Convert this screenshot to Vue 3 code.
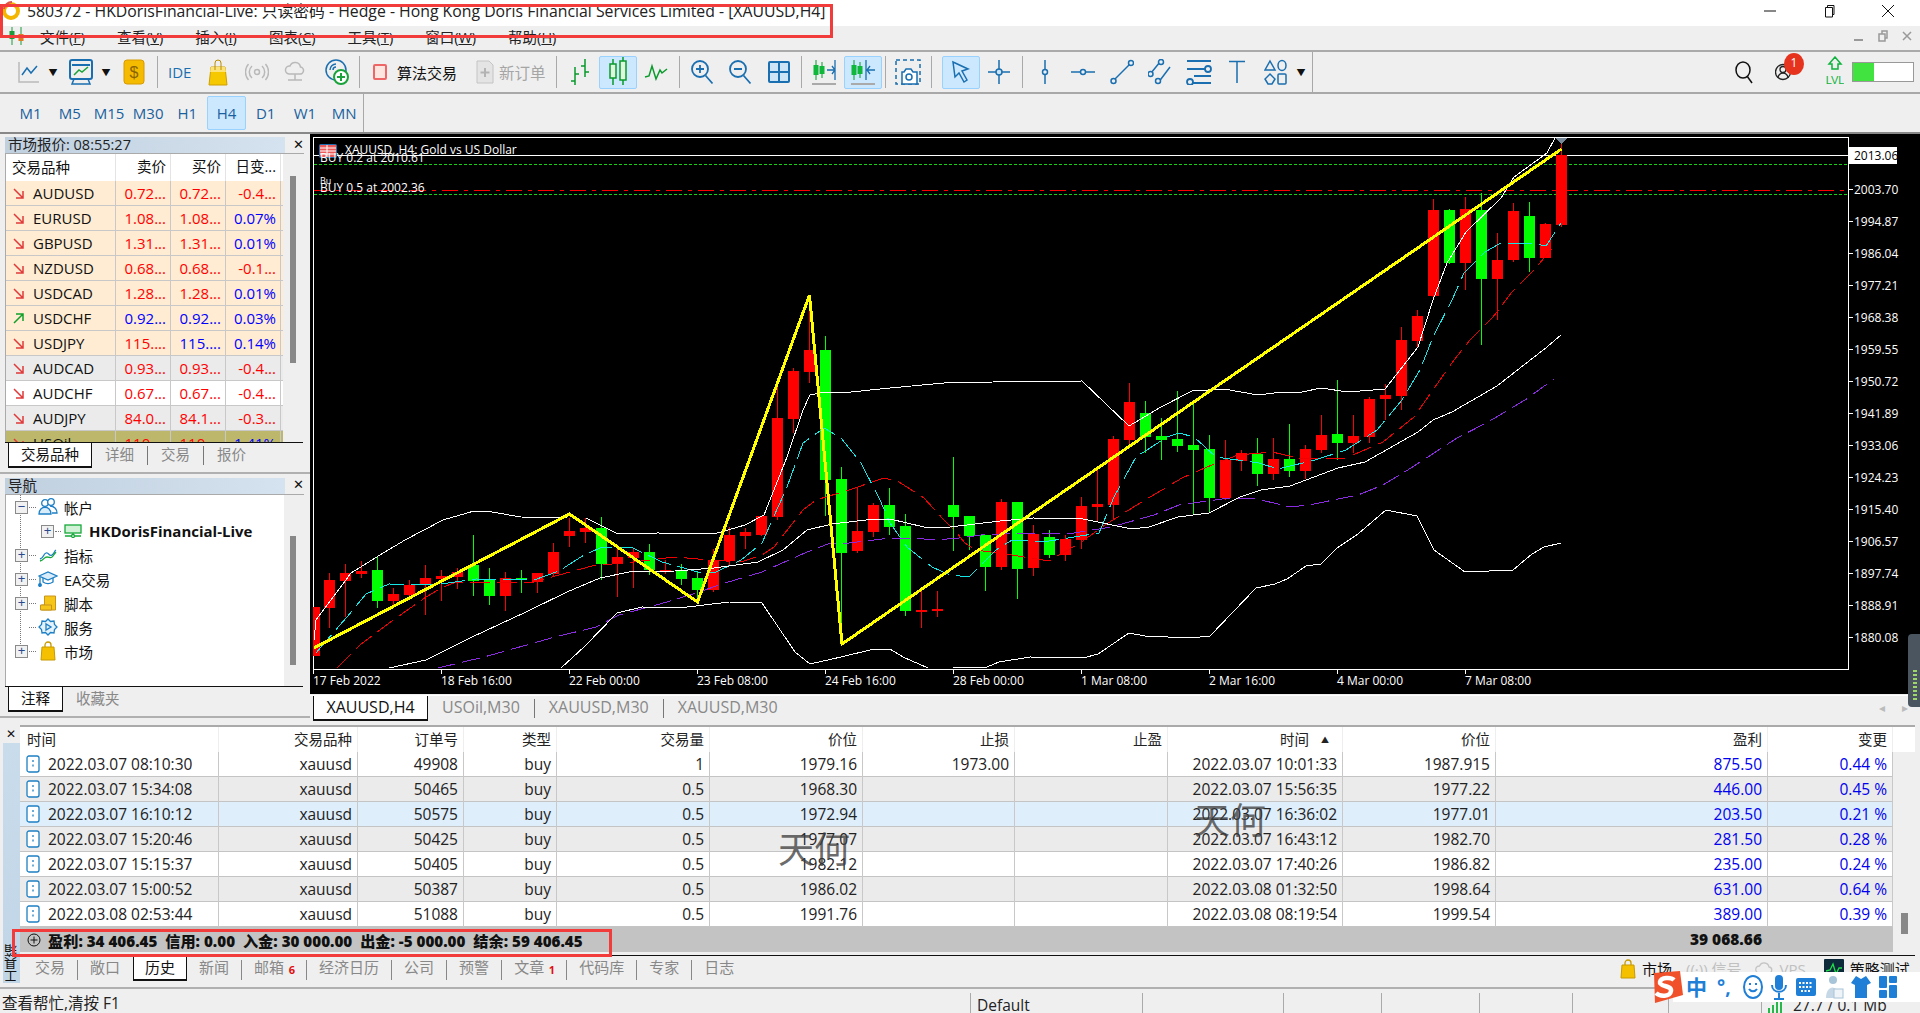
<script setup>
const menus = [['文件','F'],['查看','V'],['插入','I'],['图表','C'],['工具','T'],['窗口','W'],['帮助','H']]
const tfs = ['M1','M5','M15','M30','H1','H4','D1','W1','MN']
const quotes = [
  ['AUDUSD','0.72...','0.72...','-0.4...','c',0,0,0,0],
  ['EURUSD','1.08...','1.08...','0.07%','c',0,0,1,0],
  ['GBPUSD','1.31...','1.31...','0.01%','c',0,0,1,0],
  ['NZDUSD','0.68...','0.68...','-0.1...','c',0,0,0,0],
  ['USDCAD','1.28...','1.28...','0.01%','c',0,0,1,0],
  ['USDCHF','0.92...','0.92...','0.03%','c',1,1,1,1],
  ['USDJPY','115....','115....','0.14%','c',0,1,1,0],
  ['AUDCAD','0.93...','0.93...','-0.4...','g',0,0,0,0],
  ['AUDCHF','0.67...','0.67...','-0.4...','w',0,0,0,0],
  ['AUDJPY','84.0...','84.1...','-0.3...','g',0,0,0,0],
  ['USOil','110....','110....','1.41%','k',0,0,1,0]
].map(q => ({ sym:q[0], bid:q[1], ask:q[2], chg:q[3], bg:q[4], bidUp:q[5], askUp:q[6], chgUp:q[7], up:q[8] }))

const tree = [
  { t:'帐户', box:'−', icon:'users' },
  { t:'HKDorisFinancial-Live', box:'+', icon:'srv', sub:true },
  { t:'指标', box:'+', icon:'ind' },
  { t:'EA交易', box:'+', icon:'ea' },
  { t:'脚本', box:'+', icon:'scr' },
  { t:'服务', box:'', icon:'svc' },
  { t:'市场', box:'+', icon:'bag' }
]

const docTabs = ['USOil,M30','XAUUSD,M30','XAUUSD,M30']

const heads = ['时间','交易品种','订单号','类型','交易量','价位','止损','止盈','时间','价位','盈利','变更']
const trades = [
  ['2022.03.07 08:10:30','xauusd','49908','buy','1','1979.16','1973.00','','2022.03.07 10:01:33','1987.915','875.50','0.44 %','w'],
  ['2022.03.07 15:34:08','xauusd','50465','buy','0.5','1968.30','','','2022.03.07 15:56:35','1977.22','446.00','0.45 %','g'],
  ['2022.03.07 16:10:12','xauusd','50575','buy','0.5','1972.94','','','2022.03.07 16:36:02','1977.01','203.50','0.21 %','b'],
  ['2022.03.07 15:20:46','xauusd','50425','buy','0.5','1977.07','','','2022.03.07 16:43:12','1982.70','281.50','0.28 %','g'],
  ['2022.03.07 15:15:37','xauusd','50405','buy','0.5','1982.12','','','2022.03.07 17:40:26','1986.82','235.00','0.24 %','w'],
  ['2022.03.07 15:00:52','xauusd','50387','buy','0.5','1986.02','','','2022.03.08 01:32:50','1998.64','631.00','0.64 %','g'],
  ['2022.03.08 02:53:44','xauusd','51088','buy','0.5','1991.76','','','2022.03.08 08:19:54','1999.54','389.00','0.39 %','w']
].map(r => ({ cells:r.slice(0,12), bg:r[12] }))

const bottomTabs = [
  { t:'交易' }, { t:'敞口' }, { t:'历史', on:true }, { t:'新闻' }, { t:'邮箱', n:'6' }, { t:'经济日历' },
  { t:'公司' }, { t:'预警' }, { t:'文章', n:'1' }, { t:'代码库' }, { t:'专家' }, { t:'日志' }
]
const statusCells = [141, 98, 98, 93, 96, 93]

// chart data
const y6 = a => a.map(v => 400 + v / 3)
const raw = [
  ['r',...y6([622,622,768,768])],['r',...y6([518,540,624,685])],['r',...y6([492,518,544,650])],['r',...y6([484,514,522,533])],
  ['g',...y6([470,510,603,624])],['r',...y6([563,582,603,615])],['r',...y6([540,556,586,590])],['r',...y6([495,534,556,645])],
  ['r',...y6([510,528,538,602])],['r',...y6([505,516,531,568])],['g',...y6([405,495,543,588])],['g',...y6([504,541,588,615])],
  ['r',...y6([515,534,588,633])],['g',...y6([511,534,541,580])],['r',...y6([519,519,545,580])],['r',...y6([430,456,522,528])],
  ['r',...y6([355,393,408,441])],['r',...y6([355,385,396,430])],['g',...y6([351,384,492,540])],['r',...y6([445,471,489,591])],
  ['r',...y6([445,456,474,565])],['g',...y6([432,456,510,525])],['r',...y6([480,511,517,522])],['g',...y6([492,514,537,555])],
  ['g',...y6([515,534,570,600])],['r',...y6([448,480,570,576])],['r',...y6([382,405,483,498])],['r',...y6([385,396,408,447])],
  ['r',...y6([348,348,405,408])],
  ['r',387,418,517,520],['r',368,371,419,433],['r',305,350,372,383],['g',336,350,480,516],
  ['g',467,479,553,630],['r',487,531,551,553],['r',503,505,532,537],['g',488,505,527,535],
  ['g',514,526,611,616],['r',591,610,612,628],['r',591,609,611,617],['g',457,505,517,551],
  ['g',516,516,536,550],['g',535,535,567,591],['r',499,502,567,570],['g',502,502,569,599],['r',525,534,568,576],
  ['g',530,537,555,558],['r',535,539,555,561],['r',497,506,540,549],['r',470,504,507,522],['r',436,439,505,520],
  ['r',383,402,440,444],['g',401,413,437,453],['g',418,436,440,460],['g',391,439,446,452],['g',403,445,450,515],
  ['g',435,449,498,512],['r',440,460,498,500],['r',450,453,461,471],['g',438,454,474,486],['r',438,459,474,480],
  ['g',424,459,471,477],['r',445,449,471,479],['r',415,435,450,453],['g',380,434,443,460],['r',415,436,443,453],
  ['r',397,399,437,443],['r',384,395,399,420],['r',327,340,396,410],['r',310,316,341,347],['r',199,210,296,300],
  ['g',209,210,263,264],['r',197,209,263,290],['g',193,210,279,345],['r',233,260,279,320],['r',203,211,260,262],
  ['g',202,216,258,272],['r',223,224,258,258],['r',140,155,225,227]
]
const candles = raw.map((c, k) => {
  const x = 313.5 + 16 * k
  return { fill: c[0] === 'g' ? '#00ff00' : '#ff0000', x, top:c[1], y:c[2], h:Math.max(1, c[3]-c[2]), bot:c[4], left:Math.max(314, x-5.5), w:k===0 ? 5.5 : 11 }
})
const pts = s => s.map(p => p.join(',')).join(' ')
const bbUp = pts([[314,640],[316,620],[351,573],[380,555],[405,540],[443,520],[474,511],[492,512],[521,517],[567,518],[586,518],[618,534],[658,533],[714,534],[745,525],[764,515],[787,457],[803,410],[810,395],[824,392],[841,393],[890,388],[944,383],[993,382],[1082,381],[1129,426],[1161,407],[1192,391],[1224,389],[1258,395],[1282,392],[1302,392],[1321,388],[1348,392],[1385,389],[1418,347],[1433,300],[1447,263],[1466,232],[1501,198],[1514,177],[1547,153],[1555,138]])
const bbMid = pts([[389,668],[426,660],[472,637],[526,612],[567,592],[600,578],[629,572],[675,571],[714,568],[758,562],[783,550],[807,530],[832,524],[874,519],[890,519],[924,527],[950,527],[1000,521],[1033,518],[1083,519],[1132,529],[1149,527],[1178,517],[1209,513],[1240,497],[1261,490],[1290,486],[1338,468],[1365,462],[1418,432],[1433,420],[1452,412],[1497,386],[1547,347],[1561,335]])
const bbLow = pts([[561,668],[584,647],[617,613],[642,607],[679,608],[729,602],[762,603],[795,652],[810,664],[841,657],[874,649],[890,649],[903,657],[928,668]])
const bbLow2 = pts([[953,668],[987,667],[999,662],[1030,657],[1083,658],[1098,654],[1129,633],[1145,636],[1191,638],[1210,636],[1256,588],[1275,584],[1287,579],[1306,566],[1321,564],[1337,548],[1358,534],[1386,510],[1417,516],[1434,550],[1465,572],[1513,570],[1532,554],[1544,547],[1561,543]])
const purple = pts([[438,668],[484,657],[555,637],[596,627],[619,615],[667,602],[696,593],[725,583],[762,572],[807,552],[828,544],[849,543],[890,538],[911,538],[936,540],[959,538],[981,535],[1024,533],[1074,533],[1111,527],[1154,515],[1179,505],[1222,499],[1253,498],[1290,507],[1309,505],[1358,495],[1383,485],[1411,468],[1457,438],[1488,422],[1525,400],[1554,379]])
const redMa = pts([[337,668],[360,645],[389,623],[426,597],[443,587],[457,582],[534,582],[559,575],[592,566],[633,562],[675,557],[710,560],[741,562],[762,555],[774,547],[803,510],[816,500],[849,490],[884,478],[899,482],[924,498],[944,520],[956,532],[965,543],[975,550],[999,553],[1024,557],[1049,561],[1080,543],[1105,525],[1132,508],[1157,493],[1182,478],[1207,467],[1238,455],[1272,452],[1303,459],[1346,458],[1383,442],[1414,417],[1435,387],[1454,360],[1470,340],[1493,317],[1512,292],[1534,270],[1555,245]])
const cyan = pts([[316,653],[333,633],[347,617],[366,594],[389,584],[434,585],[476,579],[534,580],[559,571],[584,555],[600,548],[631,547],[662,562],[698,572],[714,573],[741,560],[762,543],[787,487],[803,443],[824,428],[841,438],[861,463],[880,500],[890,523],[907,547],[932,567],[950,575],[969,577],[996,550],[1012,540],[1043,542],[1068,538],[1099,533],[1114,497],[1136,457],[1167,437],[1179,433],[1194,437],[1216,457],[1259,463],[1278,469],[1315,460],[1346,450],[1377,430],[1402,400],[1420,370],[1433,337],[1452,300],[1464,273],[1485,252],[1499,244],[1530,243],[1546,246],[1561,223]])
const yellow = pts([[314,648],[569.5,514],[697.5,602],[809.5,295],[842,644],[1561.5,149]])
const prices = [[2003.70,189.5],[1994.87,221.5],[1986.04,253.5],[1977.21,285.5],[1968.38,317.5],[1959.55,349.5],[1950.72,381.5],[1941.89,413.5],[1933.06,445.5],[1924.23,477.5],[1915.40,509.5],[1906.57,541.5],[1897.74,573.5],[1888.91,605.5],[1880.08,637.5]].map(p => ({ t:p[0].toFixed(2), y:p[1] }))
const dates = ['17 Feb 2022','18 Feb 16:00','22 Feb 00:00','23 Feb 08:00','24 Feb 16:00','28 Feb 00:00','1 Mar 08:00','2 Mar 16:00','4 Mar 00:00','7 Mar 08:00'].map((t,i) => ({ t, x:313 + 128*i }))
</script>

<template>
  <div class="app">
    <header class="title">
      <svg class="logo" width="20" height="20" viewBox="0 0 20 20"><circle cx="10" cy="10" r="7" fill="none" stroke="#f3b500" stroke-width="4"/><path d="M3 8a8 8 0 0 1 8-7" fill="none" stroke="#e0534a" stroke-width="2"/></svg>
      <span class="title-text">580372 - HKDorisFinancial-Live: 只读密码 - Hedge - Hong Kong Doris Financial Services Limited - [XAUUSD,H4]</span>
      <div class="winbtns">
        <svg width="14" height="14" viewBox="0 0 14 14"><path d="M1 7h12" stroke="#111"/></svg>
        <svg width="14" height="14" viewBox="0 0 14 14"><path d="M3.500 3.500h7v9.500h-7zM5.500 3.500V1.500h6.500v9h-1.500" fill="none" stroke="#111"/></svg>
        <svg width="14" height="14" viewBox="0 0 14 14"><path d="M1 1l12 12M13 1L1 13" stroke="#111"/></svg>
      </div>
    </header>

    <nav class="menu">
      <svg class="menu-logo" width="20" height="20" viewBox="0 0 20 20"><path d="M5 1v18M14 1v18" stroke="#1c9a3c"/><rect x="2.500" y="5" width="5" height="8" fill="#1c9a3c"/><rect x="11.500" y="8" width="5" height="7" fill="#e07b20"/><path d="M7 10h5" stroke="#1c9a3c"/></svg>
      <span v-for="m in menus" :key="m[0]" class="menu-item">{{ m[0] }}(<u>{{ m[1] }}</u>)</span>
      <div class="mdibtns">
        <svg width="12" height="12" viewBox="0 0 12 12"><path d="M1 10h9" stroke="#999" stroke-width="2"/></svg>
        <svg width="12" height="14" viewBox="0 0 12 14"><path d="M2 5h6v7H2zM5 5V2h5v7H8" fill="none" stroke="#999" stroke-width="1.500"/></svg>
        <svg width="12" height="12" viewBox="0 0 12 12"><path d="M2 2l8 8M10 2l-8 8" stroke="#999" stroke-width="1.500"/></svg>
      </div>
    </nav>

    <div class="toolbar">
      <div class="tools">
        <span class="grip"></span>
        <span class="btn wide-a"><svg width="24" height="24" viewBox="0 0 24 24" fill="none"><path d="M2 2v20h20" stroke="#bbb" stroke-width="1.500"/><path d="M5 15l5-7 4 5 6-7" stroke="#1a6fb0" stroke-width="1.500"/></svg></span>
        <span class="dd">▼</span>
        <span class="btn wide-b"><svg width="26" height="28" viewBox="0 0 26 28" fill="none"><rect x="2" y="2" width="22" height="19" rx="2" stroke="#1a6fb0" stroke-width="2"/><path d="M4 7h18" stroke="#1a6fb0" stroke-width="2"/><path d="M6 17l5-5 3 2 6-5" stroke="#19a33a" stroke-width="1.500"/><path d="M6 21l-2 5h18l-2-5" stroke="#1a6fb0" stroke-width="1.500"/></svg></span>
        <span class="dd">▼</span>
        <span class="btn wide-c"><svg width="22" height="26" viewBox="0 0 22 26"><rect x="1" y="1" width="20" height="24" rx="3" fill="#f4bb00" stroke="#d79a00"/><text x="11" y="19" text-anchor="middle" font-size="16" fill="#8a6400" font-family="Liberation Sans">$</text></svg></span>
        <span class="sep"></span>
        <span class="btn ide">IDE</span>
        <span class="btn"><svg width="20" height="28" viewBox="0 0 20 28" fill="none"><path d="M3 9h14l2 18H1z" fill="#f6c800" stroke="#cfa000"/><path d="M3 9h14l1 5H2z" fill="#fbe37a"/><path d="M7 12V5a3 3 0 0 1 6 0v7" stroke="#b98c00"/></svg></span>
        <span class="btn"><svg width="24" height="20" viewBox="0 0 24 20" fill="none" stroke="#b9b9b9" stroke-width="1.500"><circle cx="12" cy="10" r="2.500"/><path d="M7 4a8 8 0 0 0 0 12M17 4a8 8 0 0 1 0 12M3.500 2a12 12 0 0 0 0 16M20.500 2a12 12 0 0 1 0 16"/></svg></span>
        <span class="btn"><svg width="24" height="24" viewBox="0 0 24 24" fill="none" stroke="#b9b9b9" stroke-width="1.500"><path d="M6 14a4 4 0 0 1 1-8 5.500 5.500 0 0 1 10.500 1 3.500 3.500 0 0 1-1 7z"/><path d="M12 14v6M5 20h14"/></svg></span>
        <span class="btn net"><svg width="26" height="30" viewBox="0 0 26 30" fill="none"><circle cx="12" cy="13" r="10" stroke="#1a6fb0" stroke-width="1.500"/><path d="M12 7a6 6 0 0 0-6 6M12 10a3 3 0 0 0-3 3" stroke="#1a6fb0" stroke-width="1.500"/><circle cx="17" cy="20" r="7" fill="#fff" stroke="#19a33a" stroke-width="2"/><path d="M17 16v8M13 20h8" stroke="#19a33a" stroke-width="2"/></svg></span>
        <span class="sep"></span>
        <span class="algo"><i class="algo-ico"></i><b>算法交易</b></span>
        <span class="order"><svg width="18" height="24" viewBox="0 0 18 24" fill="none"><path d="M1 1h12l4 4v18H1z" fill="#e4e4e4" stroke="#c4c4c4"/><path d="M9 8v9M4.500 12.500h9" stroke="#b3b3b3" stroke-width="2"/></svg><em>新订单</em></span>
        <span class="sep"></span>
        <span class="btn"><svg width="24" height="30" viewBox="0 0 24 30" fill="none" stroke="#0a9a2c" stroke-width="1.500"><path d="M8 10v18M4 24h4M8 17h4M18 2v18M14 9h4M18 15h4"/></svg></span>
        <span class="btn on"><svg width="20" height="32" viewBox="0 0 20 32" fill="none" stroke="#0a9a2c" stroke-width="1.500"><path d="M5 3v26M15 1v28"/><rect x="2" y="8" width="6" height="14" fill="#dff7df"/><rect x="12" y="5" width="6" height="19" fill="#dff7df"/></svg></span>
        <span class="btn"><svg width="24" height="18" viewBox="0 0 24 18" fill="none" stroke="#0a9a2c" stroke-width="1.500"><path d="M1 14l4-1 3-10 4 13 4-9 2 3 5-4"/></svg></span>
        <span class="sep"></span>
        <span class="btn"><svg width="24" height="26" viewBox="0 0 24 26" fill="none" stroke="#1a6fb0" stroke-width="1.800"><circle cx="10" cy="10" r="8"/><path d="M15.500 16.500l7 8M10 6v8M6 10h8"/></svg></span>
        <span class="btn"><svg width="24" height="26" viewBox="0 0 24 26" fill="none" stroke="#1a6fb0" stroke-width="1.800"><circle cx="10" cy="10" r="8"/><path d="M15.500 16.500l7 8M6 10h8"/></svg></span>
        <span class="btn"><svg width="24" height="24" viewBox="0 0 24 24" fill="none" stroke="#1a6fb0" stroke-width="2"><rect x="2" y="2" width="20" height="20" rx="1" fill="#cde4f7"/><path d="M12 2v20M2 12h20"/></svg></span>
        <span class="sep"></span>
        <span class="btn"><svg width="26" height="28" viewBox="0 0 26 28" fill="none"><path d="M5 2v20M11 4v16" stroke="#0a9a2c"/><rect x="2.500" y="7" width="5" height="10" fill="#0fb83a"/><rect x="8.500" y="8" width="5" height="8" fill="#0fb83a"/><path d="M16 12h8M21 8l3 4-3 4M24 2v20" stroke="#1a6fb0" stroke-width="1.300"/><path d="M1 26h24" stroke="#aaa" stroke-width="2"/></svg></span>
        <span class="btn on"><svg width="26" height="28" viewBox="0 0 26 28" fill="none"><path d="M4 2v20M10 4v16" stroke="#0a9a2c"/><rect x="1.500" y="7" width="5" height="10" fill="#0fb83a"/><rect x="7.500" y="8" width="5" height="8" fill="#0fb83a"/><path d="M16 2v20M25 12h-8M20 8l-3 4 3 4" stroke="#1a6fb0" stroke-width="1.300"/><path d="M1 26h24" stroke="#aaa" stroke-width="2"/></svg></span>
        <span class="sep"></span>
        <span class="btn"><svg width="26" height="28" viewBox="0 0 26 28" fill="none" stroke="#1a6fb0" stroke-width="1.500"><path d="M1 2h24v24H1z" stroke-dasharray="4 3"/><path d="M9 14l2-3h5l2 3h4v12H7V14z" fill="#fff"/><circle cx="14" cy="19" r="3"/></svg></span>
        <span class="sep"></span>
        <span class="btn on cursor"><svg width="20" height="24" viewBox="0 0 20 24" fill="none" stroke="#1a6fb0" stroke-width="1.500"><path d="M2 2l15 7-6 2 5 9-3 2-5-9-4 4z"/></svg></span>
        <span class="btn"><svg width="24" height="26" viewBox="0 0 24 26" fill="none" stroke="#1a6fb0" stroke-width="1.500"><path d="M12 1v24M1 13h22"/><circle cx="12" cy="13" r="3" fill="#cde4f7"/></svg></span>
        <span class="sep"></span>
        <span class="btn"><svg width="10" height="26" viewBox="0 0 10 26" fill="none" stroke="#1a6fb0" stroke-width="1.500"><path d="M5 1v24"/><circle cx="5" cy="13" r="2.500" fill="#efefef"/></svg></span>
        <span class="btn"><svg width="24" height="10" viewBox="0 0 24 10" fill="none" stroke="#1a6fb0" stroke-width="1.500"><path d="M0 5h24"/><circle cx="12" cy="5" r="2.500" fill="#efefef"/></svg></span>
        <span class="btn"><svg width="24" height="26" viewBox="0 0 24 26" fill="none" stroke="#1a6fb0" stroke-width="1.500"><path d="M4 21L20 5"/><circle cx="3.500" cy="22" r="2.500" fill="#efefef"/><circle cx="21" cy="4" r="2.500" fill="#efefef"/></svg></span>
        <span class="btn"><svg width="24" height="26" viewBox="0 0 24 26" fill="none" stroke="#1a6fb0" stroke-width="1.500"><path d="M3 14l9-11M10 24l12-16"/><circle cx="2.500" cy="15" r="2.500" fill="#efefef"/><circle cx="13" cy="3" r="2.500" fill="#efefef"/><circle cx="10" cy="22" r="2.500" fill="#efefef"/></svg></span>
        <span class="btn"><svg width="26" height="26" viewBox="0 0 26 26" fill="none" stroke="#1a6fb0" stroke-width="1.800"><path d="M1 2h24M1 10h18M8 17h17M7 24h18"/><circle cx="22" cy="10" r="3" fill="#efefef"/><circle cx="4" cy="23" r="3" fill="#efefef"/></svg></span>
        <span class="btn"><svg width="18" height="24" viewBox="0 0 18 24" fill="none" stroke="#1a6fb0" stroke-width="1.500"><path d="M1 1.500h16M9 1.500V23"/></svg></span>
        <span class="btn"><svg width="24" height="26" viewBox="0 0 24 26" fill="none" stroke="#1a6fb0" stroke-width="1.500"><path d="M6 2l5 9H1z"/><ellipse cx="18" cy="6.500" rx="4" ry="5"/><path d="M6 15l5 5-3 5H4l-3-5z"/><rect x="14" y="15" width="8" height="10" rx="1"/></svg></span>
        <span class="dd">▼</span>
      </div>
      <div class="status-icons">
        <svg class="srch" width="20" height="24" viewBox="0 0 20 24" fill="none" stroke="#111" stroke-width="1.500"><ellipse cx="9" cy="10" rx="7" ry="8"/><path d="M13 16l5 7"/></svg>
        <span class="user">
          <svg width="18" height="24" viewBox="0 0 18 24" fill="none" stroke="#222" stroke-width="1.300"><circle cx="8" cy="12" r="7.500"/><circle cx="8" cy="9.500" r="3"/><path d="M3 18a5 5 0 0 1 10 0"/></svg>
          <i class="badge">1</i>
        </span>
        <svg class="lvl" width="18" height="32" viewBox="0 0 18 32"><path d="M9 1L3 8h3v5h6V8h3z" fill="none" stroke="#10b33e" stroke-width="1.500"/><text x="9" y="28" text-anchor="middle" font-size="11" fill="#10b33e" font-family="Liberation Sans">LVL</text></svg>
        <span class="meter"><i></i></span>
      </div>
    </div>

    <div class="tfbar">
      <div class="tf-group">
        <span class="grip grip-tf"></span>
        <span v-for="t in tfs" :key="t" class="btn tf" :class="{ on: t === 'H4' }">{{ t }}</span>
      </div>
    </div>

    <div class="work">
      <aside class="side">
        <section class="panel market">
          <div class="ptitle"><span>市场报价: 08:55:27</span></div>
          <b class="pclose">✕</b>
          <div class="pbody">
            <div class="mw">
              <div class="mw-row mw-head"><span class="sym">交易品种</span><span>卖价</span><span>买价</span><span>日变...</span></div>
              <div v-for="q in quotes" :key="q.sym" class="mw-row" :class="'bg-' + q.bg">
                <span class="sym">
                  <svg width="11" height="11" viewBox="0 0 11 11" fill="none" :stroke="q.up ? '#12a02c' : '#e03a3a'" stroke-width="1.500">
                    <path v-if="q.up" d="M1 10L10 1M3 1h7v7"/>
                    <path v-else d="M1 1l9 9M3 10h7V3"/>
                  </svg>
                  {{ q.sym }}
                </span>
                <span :class="q.bidUp ? 'up' : 'dn'">{{ q.bid }}</span>
                <span :class="q.askUp ? 'up' : 'dn'">{{ q.ask }}</span>
                <span :class="q.chgUp ? 'up' : 'dn'">{{ q.chg }}</span>
              </div>
            </div>
            <i class="thumb thumb-a"></i>
          </div>
          <div class="ptabs">
            <span class="ptab on">交易品种</span>
            <span class="ptab">详细</span><i class="tsep"></i>
            <span class="ptab">交易</span><i class="tsep"></i>
            <span class="ptab">报价</span>
          </div>
        </section>
        <section class="panel navi">
          <div class="ptitle"><span>导航</span></div>
          <b class="pclose">✕</b>
          <div class="pbody">
            <div class="tree">
              <i class="vline"></i>
              <div v-for="r in tree" :key="r.t" class="tnode" :class="{ sub: r.sub }">
                <span v-if="r.box" class="tbox">{{ r.box }}</span>
                <span v-else class="tbox none"></span>
                <i class="dots"></i>
                <svg v-if="r.icon === 'users'" class="nico" width="20" height="18" viewBox="0 0 20 18" fill="none" stroke="#1d7fc4" stroke-width="1.300"><circle cx="7" cy="5" r="3.300"/><circle cx="13" cy="4" r="3.300" fill="#fff"/><path d="M1 16c0-9 12-9 12 0z" fill="#d8ecfa"/><path d="M12 8c4 0 7 3 7 7h-5"/></svg>
                <svg v-else-if="r.icon === 'srv'" class="nico" width="18" height="14" viewBox="0 0 18 14" fill="none" stroke="#16a83a" stroke-width="1.300"><rect x="1" y="1" width="16" height="8" fill="#d2f2d8"/><path d="M9 9v3M1 12h16"/><circle cx="9" cy="12" r="1.500" fill="#fff"/></svg>
                <svg v-else-if="r.icon === 'ind'" class="nico" width="18" height="14" viewBox="0 0 18 14" fill="none" stroke-width="1.300"><path d="M1 11c4-1 3-5 6-6s3 4 6 2 2-4 4-5" stroke="#1d7fc4"/><path d="M1 13c4-1 4-4 7-4s4 2 6-1 2-3 3-4" stroke="#16a83a"/></svg>
                <svg v-else-if="r.icon === 'ea'" class="nico" width="20" height="16" viewBox="0 0 20 16" fill="none" stroke="#1d7fc4" stroke-width="1.300"><path d="M1 5l9-4 9 4-9 4z" fill="#d8ecfa"/><path d="M5 7v4c3 2 7 2 10 0V7M2 6v8"/><circle cx="2" cy="14" r="1.300" fill="#1d7fc4"/></svg>
                <svg v-else-if="r.icon === 'scr'" class="nico" width="17" height="16" viewBox="0 0 17 16" fill="#f5c518" stroke="#c8951a"><path d="M5 1h11v14H2V10h3z"/><path d="M1 10h11v5H1z"/></svg>
                <svg v-else-if="r.icon === 'svc'" class="nico" width="18" height="18" viewBox="0 0 18 18" fill="none" stroke="#1d7fc4" stroke-width="1.300"><path d="M9 1l2.500 2.500 3.500-.5.500 3.500L18 9l-2.500 2.500-.5 3.500-3.500-.5L9 17l-2.500-2.500-3.500.5-.5-3.500L0 9l2.500-2.500.5-3.500 3.500.5z" fill="#e4f2fb"/><path d="M7 6v6l5-3z"/></svg>
                <svg v-else class="nico" width="16" height="20" viewBox="0 0 16 20" fill="none"><path d="M2 6h12l1 13H1z" fill="#f4c000" stroke="#c79a00"/><path d="M5 6V4a3 3 0 0 1 6 0v2" stroke="#c79a00" stroke-width="1.300"/></svg>
                <span class="tlabel">{{ r.t }}</span>
              </div>
            </div>
            <i class="thumb thumb-b"></i>
          </div>
          <div class="ptabs">
            <span class="ptab on short">注释</span>
            <span class="ptab">收藏夹</span>
          </div>
        </section>
      </aside>

      <main class="chart-col">
        <svg class="chart" width="1610" height="560" viewBox="310 134 1610 560" font-family="Open Sans, Noto Sans, sans-serif">
          <g shape-rendering="crispEdges">
            <rect x="310" y="134" width="1610" height="560" fill="#000"/>
            <path d="M313 137.500H1848.500V669.500H313.500V137" fill="none" stroke="#fff"/>
            <path d="M314 155.500H1848" stroke="#fff"/>
            <path d="M314 164.500H1848M314 194.500H1848" stroke="#13d613" stroke-dasharray="3 2"/>
            <path d="M314 190.500H1848" stroke="#ff0000" stroke-dasharray="16 6 4 6"/>
            <g v-for="c in candles" :key="c.x">
              <path :d="`M${c.x} ${c.top}V${c.bot}`" :stroke="c.fill"/>
              <rect :x="c.left" :y="c.y" :width="c.w" :height="c.h" :fill="c.fill"/>
            </g>
            <polyline :points="purple" fill="none" stroke="#8a2be2" stroke-dasharray="18 7"/>
            <polyline :points="redMa" fill="none" stroke="#f00000" stroke-dasharray="20 7"/>
            <polyline :points="cyan" fill="none" stroke="#17e6e6" stroke-dasharray="24 7"/>
            <polyline :points="bbUp" fill="none" stroke="#fff"/>
            <polyline :points="bbMid" fill="none" stroke="#fff"/>
            <polyline :points="bbLow" fill="none" stroke="#fff"/>
            <polyline :points="bbLow2" fill="none" stroke="#fff"/>
            <polyline :points="yellow" fill="none" stroke="#ffff00" stroke-width="3"/>
            <path d="M1556 138h11l-5.500 6z" fill="#778899"/>
            <rect x="1849" y="147" width="48" height="17" fill="#fff"/>
            <path v-for="d in dates" :key="d.t" :d="`M${d.x}.5 669V674`" stroke="#fff"/>
            <path v-for="p in prices" :key="p.t" :d="`M1848 ${p.y}H1853`" stroke="#fff"/>
          </g>
          <g fill="#fff" font-size="12">
            <rect x="319.500" y="144.500" width="17" height="13" rx="1" fill="#ec5b5b" stroke="#1a6fb0"/>
            <path d="M320 148h16M320 151h16M320 154h16M327 145v12" stroke="#fff"/>
            <text x="345" y="154">XAUUSD, H4:  Gold vs US Dollar</text>
            <text x="320" y="162">BUY 0.2 at 2010.61</text>
            <text x="320" y="184" font-size="9">Bu</text>
            <text x="320" y="192">BUY 0.5 at 2002.36</text>
            <text v-for="d in dates" :key="d.t" :x="d.x" y="685">{{ d.t }}</text>
            <text v-for="p in prices" :key="p.t" x="1854" :y="p.y + 4.500">{{ p.t }}</text>
            <text x="1854" y="160" fill="#000">2013.06</text>
          </g>
        </svg>
        <div class="doc-tabs">
          <span class="doc on">XAUUSD,H4</span>
          <template v-for="(d, i) in docTabs" :key="i">
            <span class="doc">{{ d }}</span><i v-if="i < 2" class="tsep"></i>
          </template>
          <span class="doc-arrows"><i>◂</i><i>▸</i></span>
        </div>
      </main>
    </div>

    <div class="terminal">
      <div class="term-side">
        <b class="term-x">✕</b>
        <div class="toolbox"><span>工具箱</span></div>
      </div>
      <div class="term-main">
        <div class="grid-row ghead">
          <span v-for="(h, i) in heads" :key="i" class="gc">{{ h }}</span>
        </div>
        <div v-for="(r, idx) in trades" :key="idx" class="grid-row gbody" :class="'rbg-' + r.bg">
          <span v-for="(c, i) in r.cells" :key="i" class="gc" :class="{ blue: i >= 10 }">
            <svg v-if="i === 0" class="doc-ico" width="14" height="18" viewBox="0 0 14 18" fill="#fff" stroke="#1d7fc4" stroke-width="1.300"><rect x="1" y="1" width="12" height="16" rx="2"/><path d="M7 5v2M7 9.500v2" fill="none"/></svg>
            {{ c }}
          </span>
        </div>
        <div class="grid-row gtotal">
          <span class="sum-left"><svg width="14" height="14" viewBox="0 0 14 14" fill="none" stroke="#111"><circle cx="7" cy="7" r="6"/><path d="M7 3.500v7M3.500 7h7"/></svg><b>盈利: 34 406.45&nbsp; 信用: 0.00&nbsp; 入金: 30 000.00&nbsp; 出金: -5 000.00&nbsp; 结余: 59 406.45</b></span>
          <b class="sum-right">39 068.66</b>
        </div>
        <i class="thumb thumb-c"></i>
        <div class="btabs">
          <template v-for="(t, i) in bottomTabs" :key="t.t">
            <span class="btab" :class="{ on: t.on, flag: t.n }">{{ t.t }}<sup v-if="t.n">{{ t.n }}</sup></span>
            <i v-if="i < bottomTabs.length - 1 && !t.on && !bottomTabs[i + 1].on" class="tsep"></i>
          </template>
          <div class="bt-right">
            <svg width="16" height="20" viewBox="0 0 16 20" fill="none"><path d="M2 6h12l1 13H1z" fill="#f4c000" stroke="#c79a00"/><path d="M5 6V4a3 3 0 0 1 6 0v2" stroke="#c79a00" stroke-width="1.300"/></svg>
            <span>市场</span>
            <em class="sig">((·)) 信号</em>
            <svg class="vps-ico" width="20" height="20" viewBox="0 0 20 20" fill="none" stroke="#c4c4c4" stroke-width="1.300"><path d="M5 14a3.500 3.500 0 0 1 .5-7 5 5 0 0 1 9.500 1 3 3 0 0 1-.5 6z"/><path d="M10 14v4"/></svg>
            <em class="vps">VPS</em>
            <svg class="st-ico" width="20" height="20" viewBox="0 0 20 20"><rect width="20" height="20" rx="1" fill="#0c2a3a"/><path d="M2 12l4-1 3-6 3 10 3-6h3" fill="none" stroke="#1fe04a" stroke-width="1.300"/></svg>
            <span>策略测试</span>
          </div>
        </div>
      </div>
    </div>

    <footer class="statusbar">
      <span class="st-first">查看帮忙,清按 F1</span>
      <span class="st-cell st-default">Default</span>
      <span v-for="(w, i) in statusCells" :key="i" class="st-cell" :style="{ width: w + 'px' }"></span>
      <span class="st-cell st-last">
        <svg width="17" height="16" viewBox="0 0 17 16" stroke="#27b84a" stroke-width="2"><path d="M1 16v-5M5 16V8M9 16V5M13 16V2" /></svg>
        27.7 / 0.1 Mb
      </span>
    </footer>

    <!-- overlays -->
    <i class="redbox red-a"></i>
    <i class="redbox red-b"></i>
    <span class="wm wm-a">天何</span>
    <span class="wm wm-b">天何</span>
    <div class="edge-widget"><i></i></div>
    <div class="ime">
      <svg class="ime-s" width="36" height="32" viewBox="0 0 36 32"><path d="M6 2l26-2 3 24-28 8z" fill="#f0512a"/><path d="M26 9c-3-3-13-3-14 2s12 3 11 9-11 6-15 2" fill="none" stroke="#fff" stroke-width="4.500"/></svg>
      <span class="ime-cn">中</span>
      <span class="ime-p">°,</span>
      <svg width="20" height="24" viewBox="0 0 20 24" fill="none" stroke="#1f7fd6" stroke-width="2"><ellipse cx="10" cy="12" rx="9" ry="11"/><path d="M6 14c2 3 6 3 8 0M7 8v2M13 8v2"/></svg>
      <svg width="18" height="26" viewBox="0 0 18 26" fill="#1f7fd6"><rect x="5" y="1" width="8" height="15" rx="4"/><path d="M2 11c0 9 14 9 14 0M9 19v6M4 25h10" fill="none" stroke="#1f7fd6" stroke-width="2"/></svg>
      <svg width="22" height="20" viewBox="0 0 22 20"><rect x="1" y="1" width="20" height="18" rx="2" fill="#1f7fd6"/><path d="M4 6h14M4 10h14M6 14h10" stroke="#fff" stroke-width="2" stroke-dasharray="2 1.500"/></svg>
      <svg width="20" height="24" viewBox="0 0 20 24"><circle cx="9" cy="5" r="4" fill="#a8c4d8"/><path d="M2 23c0-14 13-14 13 0z" fill="#c6d8e6"/><rect x="10" y="14" width="9" height="9" fill="#eef4f8" stroke="#a8c4d8"/></svg>
      <svg width="20" height="24" viewBox="0 0 20 24" fill="#1f7fd6"><path d="M5 1l5 3 5-3 5 7-4 2v13H4V10L0 8z"/></svg>
      <svg width="20" height="24" viewBox="0 0 20 24" fill="#1f7fd6"><rect x="1" y="1" width="8" height="12" rx="1"/><rect x="11" y="1" width="8" height="7" rx="1"/><rect x="1" y="15" width="8" height="8" rx="1"/><rect x="11" y="10" width="8" height="13" rx="1"/></svg>
    </div>
  </div>
</template>

<style>
html, body { margin: 0; background: #efefef; }
</style>

<style scoped>
.app {
  position: relative; width: 1920px; height: 1013px; overflow: hidden; display: flex; flex-direction: column;
  background: #efefef; color: #111; font: 15px "Open Sans", "Noto Sans CJK SC", sans-serif;
}
i, em { font-style: normal; }
.title { height: 26px; flex: none; background: #fff; display: flex; align-items: center; position: relative; box-sizing: border-box; padding-bottom: 5px; }
.logo { margin-left: 1px; flex: none; }
.title-text { margin-left: 6px; font-size: 15.800px; white-space: nowrap; color: #222; }
.winbtns { margin-left: auto; display: flex; gap: 45px; padding-right: 25px; align-items: center; }
.menu { height: 26px; flex: none; display: flex; align-items: center; position: relative; box-sizing: border-box; border-bottom: 2px solid #aaa; gap: 32px; padding-bottom: 4px; }
.menu-logo { margin-left: 7px; margin-right: -19px; }
.menu-item { font-size: 14.500px; flex: none; color: #222; white-space: nowrap; }
.mdibtns { margin-left: auto; display: flex; gap: 12px; padding-right: 7px; align-items: center; }
.toolbar { height: 42px; flex: none; display: flex; align-items: center; box-sizing: border-box; border-bottom: 2px solid #a8a8a8; }
.tools { display: flex; align-items: center; height: 40px; width: 1313px; flex: none; border-right: 1px solid #a8a8a8; box-sizing: border-box; }
.grip { width: 10px; flex: none; }
.grip-tf { width: 11px; }
.btn { flex: none; width: 38.500px; height: 33px; display: flex; align-items: center; justify-content: center; box-sizing: border-box; border-radius: 2px; }
.btn.on { background: #cce8ff; border: 1px solid #99d1ff; }
.wide-a { width: 37px; }
.wide-b { width: 38px; margin-left: 3px; }
.wide-c { margin-left: 3px; }
.dd { width: 12px; flex: none; font-size: 9px; text-align: center; }
.sep { width: 1px; height: 32px; background: #a9a9a9; flex: none; margin: 0 3px; }
.ide { color: #1a6fb0; font-size: 15px; font-weight: 400; letter-spacing: 0; }
.net { margin-left: 3px; }
.cursor { margin-left: 7px; }
.algo { width: 104px; display: flex; align-items: center; flex: none; padding-left: 10px; box-sizing: border-box; }
.algo b { font-weight: 400; font-size: 15px; margin-left: 10px; color: #111; white-space: nowrap; }
.algo-ico { width: 14px; height: 16px; border: 2px solid #e66; background: #fde6e0; border-radius: 2px; box-sizing: border-box; flex: none; }
.order { width: 86px; flex: none; display: flex; align-items: center; padding-left: 9px; box-sizing: border-box; }
.order em { font-size: 15.500px; color: #a5a5a5; margin-left: 5px; white-space: nowrap; }
.status-icons { flex: 1; position: relative; height: 40px; display: flex; align-items: center; justify-content: flex-end; padding-right: 6px; }
.srch { margin-right: 21px; }
.user { position: relative; display: flex; margin-right: 33px; }
.badge { position: absolute; left: 9px; top: -7px; width: 20px; height: 22px; border-radius: 50%; background: #e5331e; color: #fff; font-size: 12px; text-align: center; line-height: 20px; }
.lvl { margin-right: 8px; }
.meter { width: 60px; height: 18px; background: #fff; border: 1px solid #999; display: flex; }
.meter i { width: 21px; background: #41e341; }
.tfbar { height: 40px; flex: none; box-sizing: border-box; border-bottom: 2px solid #888; }
.tf-group { display: flex; align-items: center; width: 364px; height: 38px; border-right: 1px solid #a8a8a8; box-sizing: border-box; }
.tf { color: #1a5f9e; font-size: 15px; height: 34px; width: 39.200px; }

.work { height: 590px; flex: none; display: grid; grid-template-columns: 310px 1610px; }
.side { display: flex; flex-direction: column; }
.panel { position: relative; display: flex; flex-direction: column; box-sizing: border-box; }
.market { height: 340px; padding-top: 3px; border-bottom: 2px solid #b0b0b0; }
.navi { height: 244px; padding-top: 4px; border-bottom: 2px solid #b0b0b0; }
.ptitle { height: 16px; margin-left: 5px; width: 280px; flex: none; background: linear-gradient(90deg, #c0d0df, #d5e2ef); font-size: 14.500px; line-height: 15px; color: #222; white-space: nowrap; padding-left: 3px; box-sizing: border-box; }
.pclose { position: absolute; right: 6px; top: 1px; font-size: 13px; font-weight: 400; }
.pbody { flex: 1; min-height: 0; margin: 0 6px 0 5px; border-top: 1px solid #aaa; border-left: 1px solid #aaa; display: flex; position: relative; overflow: hidden; }
.mw { width: 277px; flex: none; background: #fff; }
.mw-row { display: grid; grid-template-columns: 110px 55px 55px 55px; height: 25px; box-sizing: border-box; border-bottom: 1px solid #c8c8c8; font-size: 15px; line-height: 24px; }
.mw-row > span { text-align: right; padding-right: 4px; border-right: 1px solid #c8c8c8; white-space: nowrap; overflow: hidden; }
.mw-row > .sym { text-align: left; padding: 0; display: flex; align-items: center; gap: 9px; padding-left: 7px; }
.mw-head { height: 27px; line-height: 26px; border-bottom: 0; font-size: 14.500px; }
.mw-head > span { border-right: 1px solid #e4e4e4; }
.mw-head > .sym { padding-left: 6px; }
.bg-c { background: #ffecd2; }
.bg-g { background: #ebebeb; }
.bg-w { background: #fff; }
.bg-k { background: #bdb76b; }
.dn { color: #f00; }
.up { color: #00f; }
.thumb { position: absolute; background: #888; display: block; }
.thumb-a { left: 284px; top: 22px; width: 6px; height: 187px; }
.thumb-b { left: 284px; top: 41px; width: 6px; height: 129px; }
.thumb-c { left: 1881px; top: 189px; width: 7px; height: 21px; }
.ptabs { height: 27px; flex: none; margin: 0 7px 2px 5px; border-top: 1px solid #111; display: flex; align-items: flex-start; font-size: 14.500px; color: #888; }
.ptab { padding: 0 13px; height: 24px; line-height: 24px; flex: none; }
.ptab.on { margin-left: 3px; padding: 0; width: 84px; text-align: center; background: #fff; color: #111; border: 1px solid #111; border-top: 0; border-bottom-width: 2px; box-sizing: border-box; height: 25px; }
.ptab.on.short { width: 55px; }
.tsep { width: 1px; height: 19px; margin-top: 3px; background: #777; flex: none; display: block; }
.tree { width: 278px; flex: none; background: #fff; position: relative; }
.vline { position: absolute; left: 14px; top: 0; height: 157px; border-left: 1px dotted #777; }
.tnode { display: flex; align-items: center; height: 24px; padding-left: 9px; position: relative; font-size: 14.500px; }
.tnode.sub { padding-left: 35px; }
.tnode.sub .tlabel { font-weight: 700; margin-left: 6px; font-size: 15px; }
.tnode.sub .dots { width: 6px; margin-right: 2px; }
.tbox { width: 11px; height: 11px; border: 1px solid #8a8a8a; background: #f1f1f1; color: #2a4a90; font: 13px/10px "Liberation Sans", sans-serif; text-align: center; flex: none; }
.tbox.none { visibility: hidden; }
.dots { width: 7px; border-top: 1px dotted #777; margin: 0 2px 0 1px; flex: none; }
.nico { flex: none; width: 20px; }
.tlabel { margin-left: 6px; white-space: nowrap; color: #111; }
.chart-col { display: flex; flex-direction: column; }
.chart { display: block; flex: none; }
.doc-tabs { height: 26px; margin-top: 1px; flex: none; display: flex; align-items: flex-start; position: relative; border-top: 1px solid #fff; color: #888; font-size: 16px; }
.doc { padding: 0 14px; height: 24px; line-height: 23px; flex: none; }
.doc.on { margin-left: 3px; padding: 0; width: 115px; box-sizing: border-box; text-align: center; background: #fff; color: #111; border: 1px solid #111; border-top: 0; border-bottom-width: 2px; height: 25px; }
.doc-arrows { position: absolute; right: 12px; top: 3px; display: flex; gap: 17px; color: #bbb; font-size: 12px; }
.terminal { height: 263px; flex: none; display: flex; }
.term-side { width: 20px; flex: none; position: relative; }
.term-x { position: absolute; left: 6px; top: 1px; font-size: 12px; font-weight: 400; }
.toolbox { position: absolute; left: 3px; top: 19px; width: 17px; height: 240px; background: linear-gradient(180deg, #c9dcec, #c0d5e6); display: flex; justify-content: center; align-items: flex-end; }
.toolbox span { writing-mode: vertical-rl; transform: rotate(180deg); font-size: 13px; line-height: 17px; color: #111; }
.term-main { flex: 1; position: relative; display: flex; flex-direction: column; font-size: 15.500px; }
.grid-row { width: 1873px; flex: none; display: grid; grid-template-columns: 199px 139px 106px 93px 153px 153px 152px 153px 175px 153px 272px 125px; height: 25px; box-sizing: border-box; }
.gc { text-align: right; padding-right: 5px; border-right: 1px solid #c8c8c8; line-height: 25px; white-space: nowrap; position: relative; color: #222; }
.gc:first-child { text-align: left; padding-left: 28px; padding-right: 0; }
.gbody { border-bottom: 1px solid #c4c4c4; }
.ghead { height: 27px; margin-top: 1px; background: #fff; border-top: 2px solid #aaa; width: 1895px; }
.ghead .gc { border-right: 1px solid #eee; line-height: 25px; font-size: 14.500px; }
.ghead .gc:first-child { padding-left: 7px; }
.ghead .gc:nth-child(9)::after { content: "▲"; font-size: 8px; margin-left: 12px; margin-right: 8px; vertical-align: 2px; }
.rbg-w { background: #fff; }
.rbg-g { background: #ebebeb; }
.rbg-b { background: #deeefb; }
.blue { color: #0000f0; }
.doc-ico { position: absolute; left: 6px; top: 3px; }
.gtotal { background: #c3c3c3; height: 25px; font-weight: 700; }
.sum-left { grid-column: 1 / 11; display: flex; align-items: center; gap: 7px; padding-left: 7px; white-space: nowrap; }
.sum-left b { font-size: 15.200px; }
.sum-right { grid-column: 11; text-align: right; padding-right: 6px; line-height: 24px; }
.btabs { margin-top: 3px; height: 30px; border-top: 1px solid #111; width: 1895px; display: flex; align-items: flex-start; position: relative; color: #888; font-size: 15px; }
.btab { padding: 0 12px; height: 24px; line-height: 23px; flex: none; position: relative; }
.btab:first-child { padding-left: 15px; }
.btab.flag { padding-right: 22px; }
.btab sup { position: absolute; right: 11px; top: 3px; color: #e01010; font-size: 11px; font-weight: 700; line-height: 22px; }
.btab.on { background: #fff; color: #111; border: 1px solid #111; border-top: 0; border-bottom-width: 2px; height: 25px; box-sizing: border-box; padding: 0 11px; margin: 0 0 0 1px; }
.btabs .tsep { height: 20px; margin-top: 4px; background: #888; }
.bt-right { position: absolute; left: 1600px; top: 2px; display: flex; align-items: center; gap: 6px; color: #111; white-space: nowrap; }
.sig { margin-left: 8px; color: #c0c0c0; }
.vps-ico { margin-left: 6px; }
.vps { color: #c0c0c0; }
.st-ico { margin-left: 12px; }
.statusbar { height: 26px; flex: none; box-sizing: border-box; border-top: 2px solid #b0b0b0; display: flex; align-items: flex-start; font-size: 15.500px; color: #222; }
.st-first { width: 970px; flex: none; padding-left: 2px; box-sizing: border-box; line-height: 29px; white-space: nowrap; }
.st-cell { height: 24px; margin-top: 4px; border-left: 1px solid #aaa; box-sizing: border-box; flex: none; white-space: nowrap; }
.st-default { width: 172px; padding-left: 6px; line-height: 24px; }
.st-last { padding-left: 6px; line-height: 24px; display: flex; align-items: center; gap: 8px; }
.redbox { position: absolute; border: 3px solid #f23c3c; box-sizing: border-box; display: block; pointer-events: none; }
.red-a { left: 0; top: 4px; width: 833px; height: 34px; }
.red-b { left: 12px; top: 929px; width: 600px; height: 28px; }
.wm { position: absolute; font-size: 36px; color: rgba(60, 60, 60, .75); line-height: 36px; letter-spacing: 0; }
.wm-a { left: 778px; top: 832px; }
.wm-b { left: 1194px; top: 803px; }
.edge-widget { position: absolute; left: 1908px; top: 634px; width: 14px; height: 73px; background: #4b5560; border-radius: 4px 0 0 4px; }
.edge-widget i { display: block; margin: 36px 0 0 5px; width: 4px; height: 30px; background: repeating-linear-gradient(180deg, #9fd66a 0 2px, #4b5560 2px 4px); }
.ime { position: absolute; left: 1673px; top: 972px; width: 247px; height: 30px; background: #fff; display: flex; align-items: center; gap: 7px; padding-left: 13px; box-sizing: border-box; }
.ime-s { position: absolute; left: -25px; top: -1px; }
.ime-cn { color: #1f7fd6; font-size: 21px; font-weight: 700; line-height: 30px; }
.ime-p { color: #1f7fd6; font-size: 19px; font-weight: 700; margin: 0 3px; width: 16px; }
</style>
